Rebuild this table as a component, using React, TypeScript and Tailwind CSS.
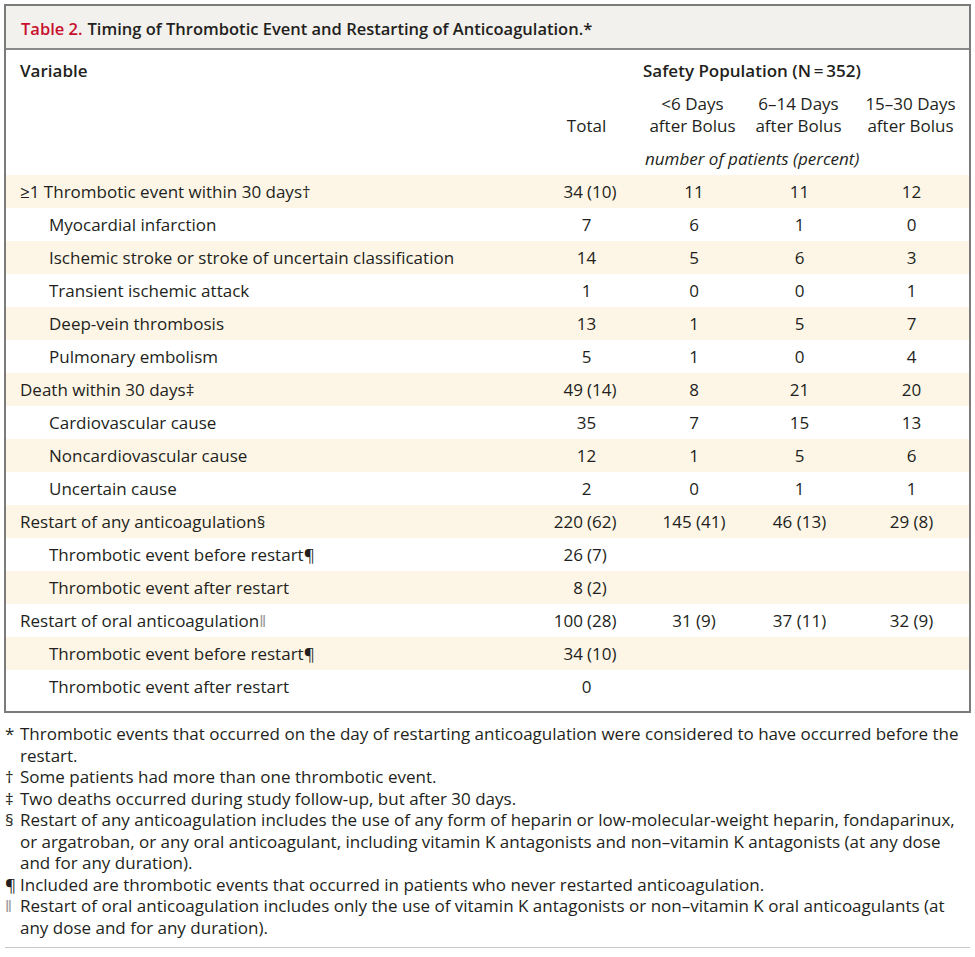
/**
 * Tabla 2: momento del evento trombótico y reinicio de anticoagulación
 */

type Cell = string;

interface Row {
    label: string;
    mark?: string;
    markGray?: boolean;
    indent?: boolean;
    values: [Cell, Cell, Cell, Cell];
}

const rows: Row[] = [
    { label: '≥1 Thrombotic event within 30 days', mark: '†', values: ['34 (10)', '11', '11', '12'] },
    { label: 'Myocardial infarction', indent: true, values: ['7', '6', '1', '0'] },
    { label: 'Ischemic stroke or stroke of uncertain classification', indent: true, values: ['14', '5', '6', '3'] },
    { label: 'Transient ischemic attack', indent: true, values: ['1', '0', '0', '1'] },
    { label: 'Deep-vein thrombosis', indent: true, values: ['13', '1', '5', '7'] },
    { label: 'Pulmonary embolism', indent: true, values: ['5', '1', '0', '4'] },
    { label: 'Death within 30 days', mark: '‡', values: ['49 (14)', '8', '21', '20'] },
    { label: 'Cardiovascular cause', indent: true, values: ['35', '7', '15', '13'] },
    { label: 'Noncardiovascular cause', indent: true, values: ['12', '1', '5', '6'] },
    { label: 'Uncertain cause', indent: true, values: ['2', '0', '1', '1'] },
    { label: 'Restart of any anticoagulation', mark: '§', values: ['220 (62)', '145 (41)', '46 (13)', '29 (8)'] },
    { label: 'Thrombotic event before restart', mark: '¶', indent: true, values: ['26 (7)', '', '', ''] },
    { label: 'Thrombotic event after restart', indent: true, values: ['8 (2)', '', '', ''] },
    { label: 'Restart of oral anticoagulation', mark: '‖', markGray: true, values: ['100 (28)', '31 (9)', '37 (11)', '32 (9)'] },
    { label: 'Thrombotic event before restart', mark: '¶', indent: true, values: ['34 (10)', '', '', ''] },
    { label: 'Thrombotic event after restart', indent: true, values: ['0', '', '', ''] },
];

const footnotes: { mark: string; gray?: boolean; text: string }[] = [
    { mark: '*', text: 'Thrombotic events that occurred on the day of restarting anticoagulation were considered to have occurred before the restart.' },
    { mark: '†', text: 'Some patients had more than one thrombotic event.' },
    { mark: '‡', text: 'Two deaths occurred during study follow-up, but after 30 days.' },
    { mark: '§', text: 'Restart of any anticoagulation includes the use of any form of heparin or low-molecular-weight heparin, fondaparinux, or argatroban, or any oral anticoagulant, including vitamin K antagonists and non–vitamin K antagonists (at any dose and for any duration).' },
    { mark: '¶', text: 'Included are thrombotic events that occurred in patients who never restarted anticoagulation.' },
    { mark: '‖', gray: true, text: 'Restart of oral anticoagulation includes only the use of vitamin K antagonists or non–vitamin K oral anticoagulants (at any dose and for any duration).' },
];

const gridCols = 'grid grid-cols-[524px_110px_105px_107px_117px]';

/**
 * Celda de Total alineada por el paréntesis
 */
function TotalCell({ value }: { value: string }) {
    const idx = value.indexOf(' (');
    if (idx === -1) {
        return <div className="text-center pl-[3px]">{value}</div>;
    }
    return (
        <div className="flex">
            <span className="w-[53px] text-right">{value.slice(0, idx)}</span>
            <span className="pl-[4px] text-left">{value.slice(idx + 1)}</span>
        </div>
    );
}

export default function App() {
    return (
        <div className="w-[975px] h-[957px] bg-white pt-[4px] font-['Open_Sans',sans-serif] text-[17px] text-[#231f20]">
            {/* Caja de la tabla */}
            <div className="ml-[4px] w-[967px] border-2 border-[#7b7b7b]">
                <div className="h-[44px] bg-[#f3f1ed] border-b-2 border-[#8a8a8a] flex items-center pt-[5px] pl-[15px] text-[16.5px] font-semibold">
                    <span className="text-[#c8102e]">Table 2.</span>
                    <span className="ml-[5px]">Timing of Thrombotic Event and Restarting of Anticoagulation.*</span>
                </div>

                {/* Encabezados */}
                <div className={`${gridCols} leading-[22px] pt-[10px]`}>
                    <div className="pl-[14px] font-semibold">Variable</div>
                    <div />
                    <div className="col-span-3 pl-[3px] font-semibold">Safety Population (N{'\u2009'}={'\u2009'}352)</div>

                    <div className="mt-[11px]" />
                    <div className="mt-[11px] flex items-end justify-center pl-[3px]">Total</div>
                    <div className="mt-[11px] text-center">&lt;6 Days<br />after Bolus</div>
                    <div className="mt-[11px] text-center">6–14 Days<br />after Bolus</div>
                    <div className="mt-[11px] text-center">15–30 Days<br />after Bolus</div>

                    <div className="mt-[11px]" />
                    <div className="mt-[11px]" />
                    <div className="mt-[11px] col-span-3 pl-[5px] italic">number of patients (percent)</div>
                </div>

                {/* Filas */}
                <div className="mt-[5px] pb-[8px]">
                    {rows.map((row, i) => (
                        <div
                            key={i}
                            className={`${gridCols} h-[33px] items-center ${i % 2 === 0 ? 'bg-[#fdf6e7]' : ''}`}
                        >
                            <div className={row.indent ? 'pl-[43px]' : 'pl-[14px]'}>
                                {row.label}
                                {row.mark && (
                                    <span className={row.markGray ? 'text-[#9a9a9a]' : ''}>{row.mark}</span>
                                )}
                            </div>
                            <TotalCell value={row.values[0]} />
                            <div className="text-center pl-[3px]">{row.values[1]}</div>
                            <div className="text-center pl-[2px]">{row.values[2]}</div>
                            <div className="text-center pl-[2px]">{row.values[3]}</div>
                        </div>
                    ))}
                </div>
            </div>

            {/* Notas al pie */}
            <div className="mt-[10px] pl-[5px] pr-[10px] leading-[21.5px]">
                {footnotes.map((f, i) => (
                    <div key={i} className="flex">
                        <span className={`w-[15px] shrink-0 ${f.gray ? 'text-[#9a9a9a]' : ''}`}>{f.mark}</span>
                        <span>{f.text}</span>
                    </div>
                ))}
            </div>
            <div className="ml-[5px] w-[965px] mt-[9px] border-t border-[#c8c8c8]" />
        </div>
    );
}
